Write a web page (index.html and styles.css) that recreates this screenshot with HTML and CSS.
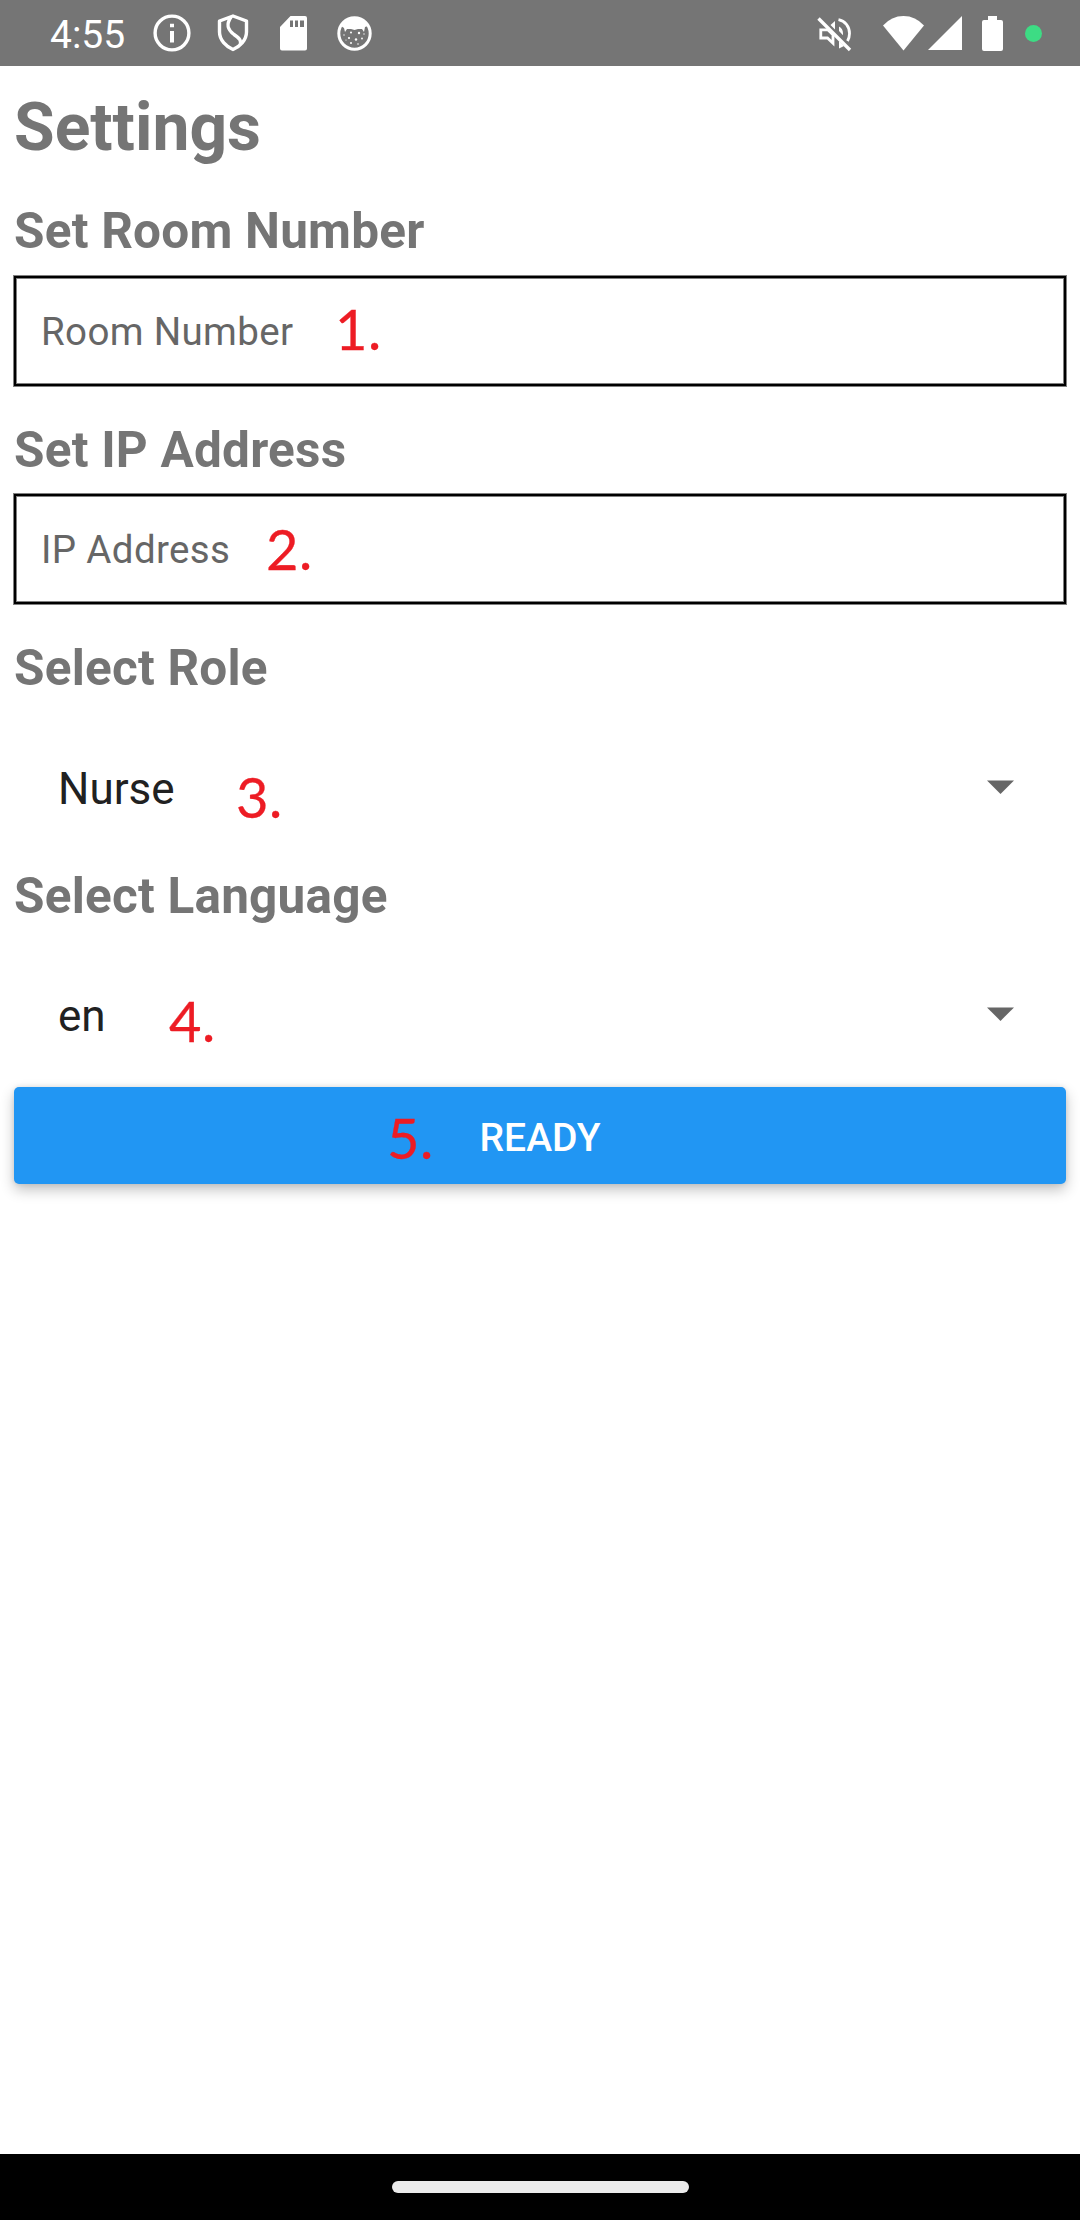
FILE: index.html
```html
<!DOCTYPE html>
<html lang="en">
<head>
<meta charset="utf-8">
<title>Settings</title>
<link rel="stylesheet" href="styles.css">
</head>
<body>
<div class="screen">
  <header class="status-bar">
    <span class="clock">4:55</span>
    <div class="notifications">
      <svg width="38" height="38" viewBox="0 0 38 38"><circle cx="19" cy="19" r="16.9" fill="none" stroke="#fff" stroke-width="3.4"/><path d="M17 9.700h4v3.600h-4zM17 17h4v11.500h-4z" fill="#fff"/></svg>
      <svg width="32" height="38" viewBox="0 0 32 38"><path d="M16 2 29.500 7v11C29.500 26 23 32.500 16 35.500 9 32.500 2.500 26 2.500 18V7z M14 3C8.500 11 11 16 17 20.500c6.500 4.500 7.500 6.500 6 11" fill="none" stroke="#fff" stroke-width="3.400" stroke-linejoin="round"/></svg>
      <svg width="28" height="35" viewBox="0 0 28 35"><path fill-rule="evenodd" d="M10.500 0H25q2 0 2 2v30.500q0 2-2 2H2q-2 0-2-2V11zM10 4.500V11h3V4.500zm5 0V11h3V4.500zm5 0V11h4V4.500z" fill="#fff"/></svg>
      <svg width="35" height="35" viewBox="0 0 35 35"><circle cx="17.500" cy="17.500" r="15.700" fill="none" stroke="#fff" stroke-width="3"/><path d="M4 10Q9 2 17.500 2T31 10l-3 1-1 5-2-3-4 0-3.500 1L14 13l-4 0-2 3-1-4z" fill="#fff"/><g fill="#fff"><circle cx="14" cy="16.500" r="1"/><circle cx="22" cy="17" r="1.200"/><circle cx="12" cy="22" r="1.100"/><circle cx="19" cy="23.500" r="1.200"/><circle cx="25" cy="22.500" r=".9"/><circle cx="14" cy="27" r="1"/><circle cx="21" cy="28" r=".8"/><circle cx="27" cy="18" r=".7"/><circle cx="7" cy="19" r=".7"/><circle cx="9" cy="24" r=".6"/></g></svg>
    </div>
    <div class="system-icons">
      <svg class="muted" width="35" height="35" viewBox="0 0 35 35"><g fill="none" stroke="#fff" stroke-width="2.800"><path d="M3.800 12.800h7l5.200 5v8.500l-5.500-5.300H3.800z"/><path d="M21.500 2.700C28 4 32.500 9.500 32.500 16.500q0 4-2 7.500"/></g><path d="M18 4v8.500L13.500 8zM22 9.500q4 2 4 7v1.800L22 14zM22 24l5 5-5 2.500z" fill="#fff"/><path d="M1.500 1.500l31.500 31.500" stroke="#fff" stroke-width="3.400"/></svg>
      <svg class="wifi" width="41" height="35" viewBox="0 0 41 35"><path d="M0 9.500Q8.500 0 20.500 0T41 9.500L20.500 34.500z" fill="#fff"/></svg>
      <svg class="signal" width="34" height="34" viewBox="0 0 34 34"><path d="M34 0v34H0z" fill="#fff"/></svg>
      <svg class="battery" width="21" height="35" viewBox="0 0 21 35"><path d="M6 0h9v4h4q2 0 2 2v27q0 2-2 2H2q-2 0-2-2V6q0-2 2-2h4z" fill="#fff"/></svg>
      <span class="privacy-dot"></span>
    </div>
  </header>

  <main class="content">
    <h1 class="title">Settings</h1>

    <h2 class="label">Set Room Number</h2>
    <div class="field">Room Number<span class="note note-room">1.</span></div>

    <h2 class="label">Set IP Address</h2>
    <div class="field">IP Address<span class="note note-ip">2.</span></div>

    <h2 class="label">Select Role</h2>
    <div class="picker">
      <span>Nurse</span>
      <svg class="caret" width="27" height="14" viewBox="0 0 27 14"><path d="M0 .4h27L13.500 13.900z" fill="#666"/></svg>
      <span class="note note-role">3.</span>
    </div>

    <h2 class="label">Select Language</h2>
    <div class="picker">
      <span>en</span>
      <svg class="caret" width="27" height="14" viewBox="0 0 27 14"><path d="M0 .4h27L13.500 13.900z" fill="#666"/></svg>
      <span class="note note-language">4.</span>
    </div>

    <button class="ready" type="button">READY<span class="note note-ready">5.</span></button>
  </main>

  <footer class="nav-bar"><span class="home-handle"></span></footer>
</div>
</body>
</html>
```
FILE: styles.css
```css
* { box-sizing: border-box; }

body {
  margin: 0;
  background: #fff;
  font-family: Roboto, "Liberation Sans", sans-serif;
}

.screen {
  display: flex;
  flex-direction: column;
  width: 1080px;
  height: 2220px;
}

.status-bar {
  display: flex;
  align-items: center;
  height: 66px;
  padding: 0 38px 0 50px;
  background: #757575;
  color: #fff;
}

.status-bar svg { display: block; }

.clock {
  width: 103px;
  font-size: 39px;
  line-height: 66px;
  padding-top: 3px;
}

.notifications { display: flex; align-items: center; }
.notifications svg + svg { margin-left: 26px; }
.notifications svg:nth-child(3) { margin-left: 31px; }
.notifications svg:nth-child(4) { margin-left: 29px; }

.system-icons { display: flex; align-items: center; margin-left: auto; }
.muted { margin: 2px 31px 0 0; }
.wifi { margin-right: 4px; }
.signal { margin-right: 20px; }
.battery { margin-right: 22px; }

.privacy-dot {
  width: 17px;
  height: 17px;
  border-radius: 50%;
  background: #3ddc84;
}

.content { flex: 1; padding: 18px 14px 0; }

.title, .label { margin: 0; color: #757575; font-weight: 700; }
.title { height: 114px; font-size: 66px; line-height: 88px; }
.label { height: 78px; font-size: 49.5px; line-height: 66px; letter-spacing: .22px; }

.field {
  position: relative;
  height: 110px;
  margin-bottom: 31px;
  padding-left: 25px;
  border: 2px solid #000;
  box-shadow: 0 0 0 1px #808080, inset 0 0 0 1px #808080;
  color: #666;
  font-size: 38.5px;
  line-height: 108px;
  letter-spacing: .35px;
}

.field + .label { height: 77px; }

.picker {
  position: relative;
  display: flex;
  justify-content: space-between;
  height: 148px;
  padding: 19px 52px 0 44px;
  color: #212121;
  font-size: 44px;
  line-height: 116px;
}

.picker + .label { height: 76px; margin-top: 3px; }

.caret { margin-top: 49px; }

.ready {
  position: relative;
  display: block;
  width: 100%;
  height: 97px;
  padding: 0;
  border: 0;
  border-radius: 5px;
  background: #2196f3;
  box-shadow: 0 6px 14px rgba(0, 0, 0, .24), 0 0 5px rgba(0, 0, 0, .1);
  color: #fff;
  font: 500 39px/102px Roboto, sans-serif;
}

/* Numbered callouts laid over the controls */
.note {
  position: absolute;
  color: #ed1c24;
  font: 400 56px/60px Lato, sans-serif;
  letter-spacing: .5px;
  -webkit-text-stroke: .3px #ed1c24;
}

.note-room { left: 319px; top: 21px; }
.note-ip { left: 250px; top: 23px; }
.note-role { left: 222px; top: 55px; }
.note-language { left: 155px; top: 52px; }
.note-ready { left: 373px; top: 21px; }

.nav-bar {
  display: flex;
  justify-content: center;
  align-items: center;
  height: 66px;
  background: #000;
}

.home-handle {
  width: 297px;
  height: 12px;
  border-radius: 6px;
  background: #ebebeb;
}
```
